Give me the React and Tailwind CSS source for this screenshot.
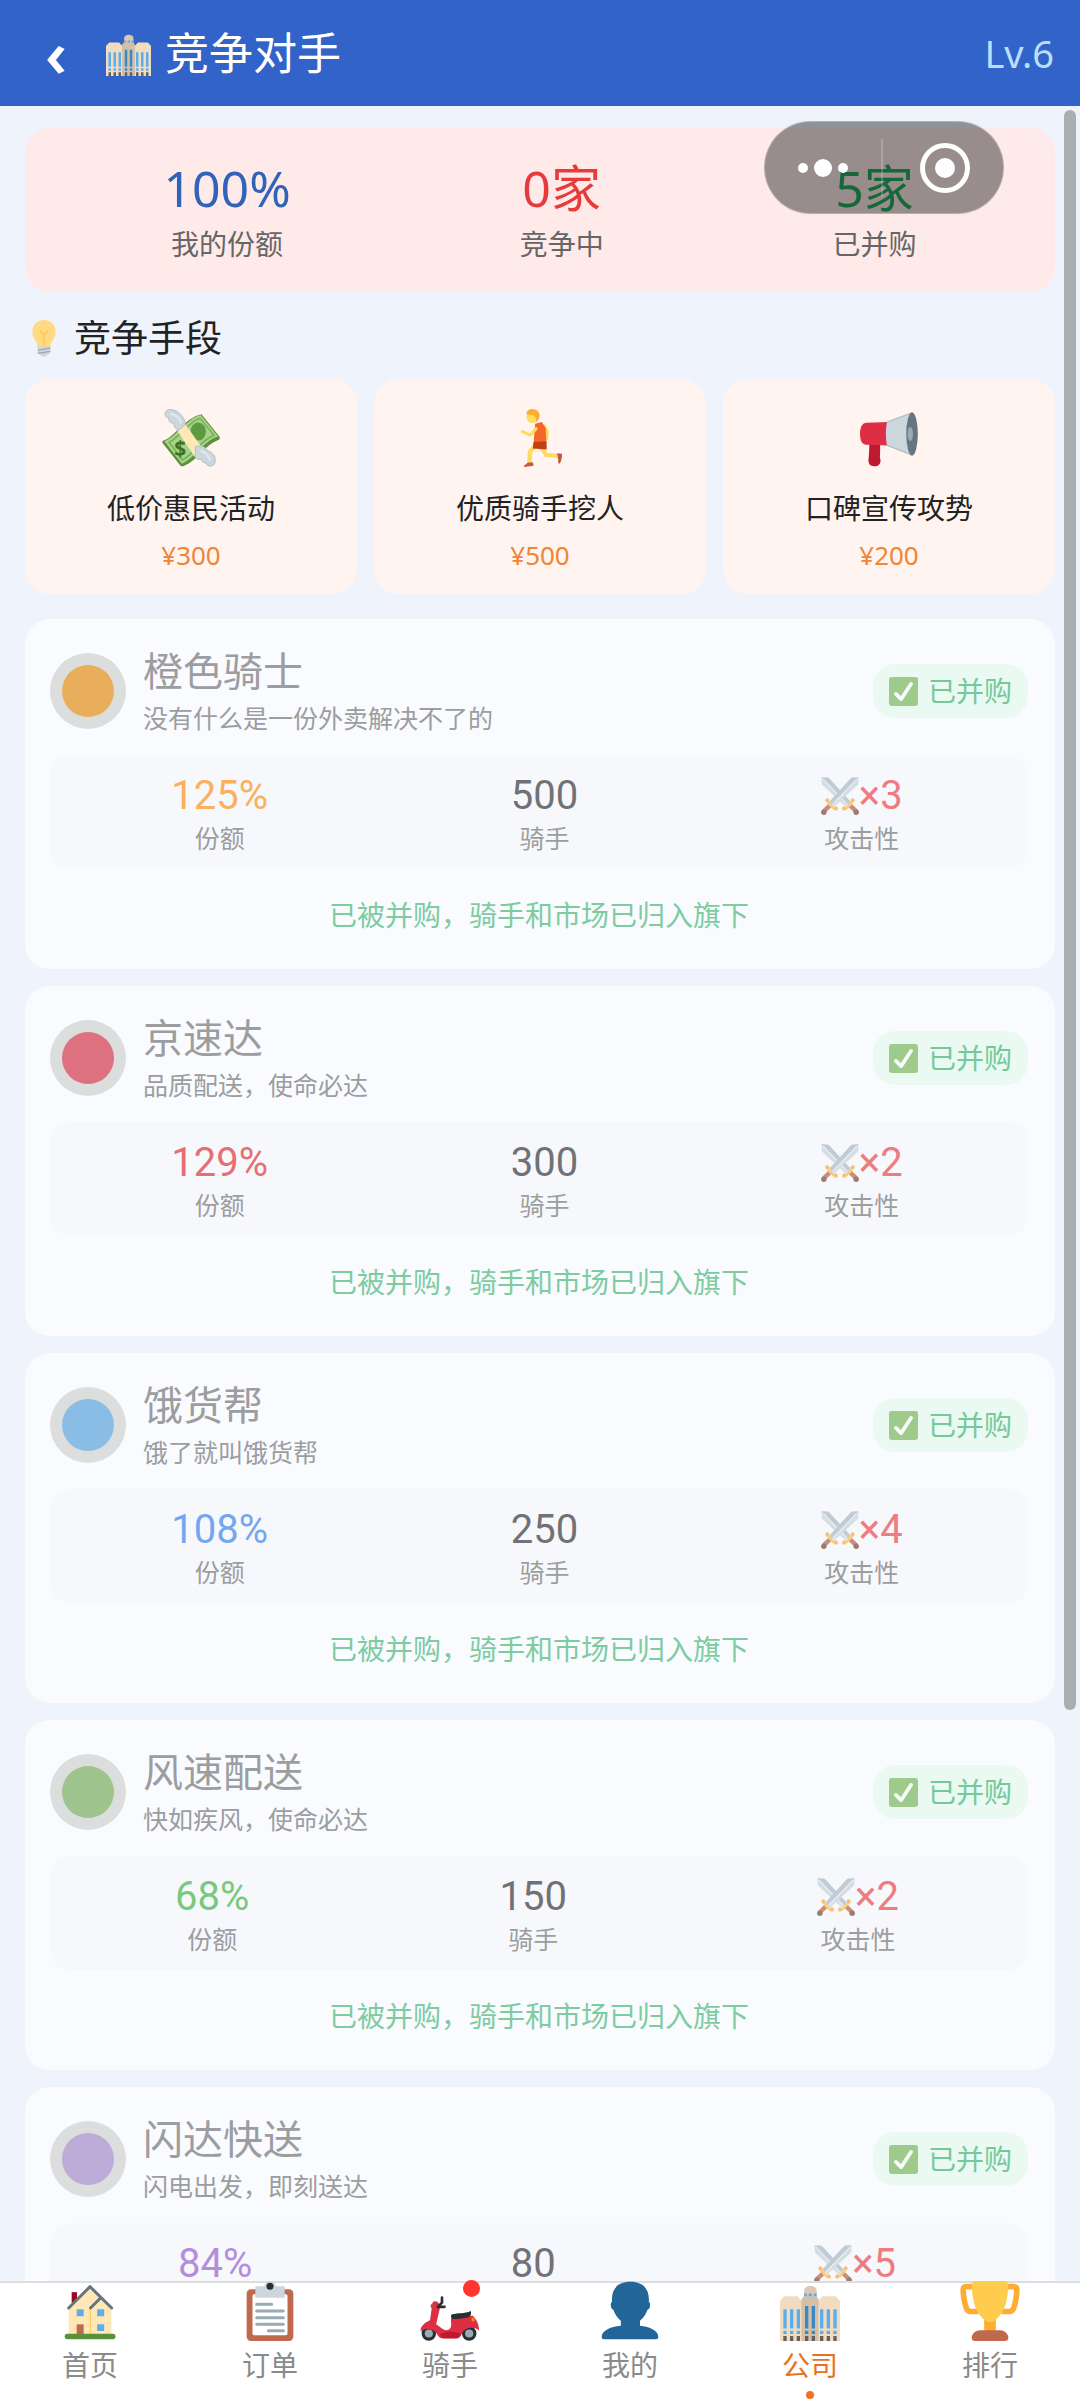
import React, { useState } from 'react'

const rivals = [
  { id: 1, name: '橙色骑士', slogan: '没有什么是一份外卖解决不了的', share: 125, riders: 500, attack: 3, dot: 'bg-[#e9ae5c]', text: 'text-[#fab05e]' },
  { id: 2, name: '京速达', slogan: '品质配送，使命必达', share: 129, riders: 300, attack: 2, dot: 'bg-[#dd7180]', text: 'text-[#e76e74]' },
  { id: 3, name: '饿货帮', slogan: '饿了就叫饿货帮', share: 108, riders: 250, attack: 4, dot: 'bg-[#8abde6]', text: 'text-[#73a7f0]' },
  { id: 4, name: '风速配送', slogan: '快如疾风，使命必达', share: 68, riders: 150, attack: 2, dot: 'bg-[#9fc38d]', text: 'text-[#78c97e]' },
  { id: 5, name: '闪达快送', slogan: '闪电出发，即刻送达', share: 84, riders: 80, attack: 5, dot: 'bg-[#bdabd8]', text: 'text-[#b58ddd]' }
]

const Building = ({ className }) => (
  <svg viewBox="0 0 36 36" className={className} aria-hidden="true">
    <path d="M14.5 10V6c0-2 1.500-3 3.700-3S22 4 22 6v4z" fill="#dac8b1" />
    <path d="M14.500 7.500h1.500v2h-1.500zM17.200 7.500h2v2h-2zM20.400 7.500H22v2h-1.600z" fill="#55acee" />
    <path d="M0 12l2.500-2.800h8L13 12v24H0zM23 12l2.500-2.800h8L36 12v24H23z" fill="#f1dcc1" />
    <path d="M12.800 11l1.500-1.800h7.400L23.200 11v25H12.800z" fill="#d4c0a9" />
    <path d="M2 17h2v11.500H2zM6 17h2v11.500H6zM10 17h2v11.500h-2zM24 17h2v11.500h-2zM28 17h2v11.500h-2zM32 17h2v11.500h-2zM2 29.800h2v2H2zM6 29.800h2v2H6zM10 29.800h2v2h-2zM24 29.800h2v2h-2zM28 29.800h2v2h-2zM32 29.800h2v2h-2z" fill="#5dadec" />
    <path d="M15 15h2v13.500h-2zM19 15h2v13.500h-2zM15 29.800h2v2h-2zM19 29.800h2v2h-2z" fill="#3b88c3" />
    <path d="M2 33h2v3H2zM6 33h2v3H6zM10 33h2v3h-2zM15 33h2v3h-2zM19 33h2v3h-2zM24 33h2v3h-2zM28 33h2v3h-2zM32 33h2v3h-2z" fill="#66605c" />
  </svg>
)

const Bulb = ({ className }) => (
  <svg viewBox="0 0 36 36" className={className} aria-hidden="true">
    <path d="M29 11.500c0 7.500-5 9.500-5 15.500H12c0-6-5-8-5-15.500C7 5.400 11.800 1 18 1s11 4.400 11 10.500z" fill="#ffd983" />
    <path d="M14 11l4 4 4-4M18 15v11" fill="none" stroke="#ffcc4d" strokeWidth="1.600" />
    <path d="M12 26h12v6l-3 2c-1 2-5 2-6 0l-3-2z" fill="#ccd6dd" />
    <path d="M12 29.500l12-1.800M12 32.500l12-1.800" stroke="#99aab5" strokeWidth="1.200" />
  </svg>
)

const MoneyWings = ({ className }) => (
  <svg viewBox="0 0 36 36" className={className} aria-hidden="true">
    <path d="M1 19.600C8 17 15 5 24.500 3.200l11 13.700c.8 1.100.4 2-.6 2.400C27 22 22 32 13.500 35.400c-1 .4-1.700.2-2.400-.7L.5 21.300c-.6-.8-.4-1.400.5-1.700z" fill="#5c913b" />
    <path d="M1.500 20C9 17.300 15.500 6 24 3.800L34.800 17C26 19.500 20.500 30.500 12.300 34z" fill="#a7d28b" />
    <path d="M4.500 20.600C11 17.500 16.500 8 23.600 5.800L32.300 16.300C24.500 19 19.500 28.500 12.600 31.600z" fill="none" stroke="#77b255" strokeWidth="1" />
    <ellipse cx="22.500" cy="14" rx="4.800" ry="5.600" fill="#5c9b3f" />
    <text x="7.600" y="29" fontSize="13" fontWeight="700" fill="#3e721d" className="font-['Noto_Sans']">$</text>
    <path d="M9.500 13.500L14.500 9.500 25.500 25 20.500 30z" fill="#ffe8b6" />
    <path d="M14.500 9.500C14 4 9 0 4.500.3 2 .5 1.200 3 2.300 4.500c.5.800 1.500 1 2 1-.6 1.800 1 3.600 3 3.200-.4 1.700 1 3.600 3 4.600z" fill="#ccd6dd" stroke="#aab8c2" strokeWidth=".5" />
    <path d="M20.500 30c.5-2 0-4.500 0-6.500 4-1.500 7 .5 8 2.500 3 .500 5 3.500 4.500 6.500 0 2-1.500 3-3 3-1.500 0-2.500-1-2.500-2-2 .3-3-1-3-2.200-1.700.3-3-.2-4-1.300z" fill="#ccd6dd" stroke="#aab8c2" strokeWidth=".5" />
    <path d="M5 3c3 .2 6 2.500 7 6M24 26c3 1 5 3 6 6" fill="none" stroke="#e1e8ed" strokeWidth="1.400" />
  </svg>
)

const Runner = ({ className }) => (
  <svg viewBox="0 0 36 36" className={className} aria-hidden="true">
    <g fill="none" strokeLinecap="round" strokeLinejoin="round">
      <path d="M20.500 10.500l2 3.500-.3 4.500" stroke="#f7dc5a" strokeWidth="1.900" />
      <path d="M19 24l2.800 4.500 7.200.6" stroke="#ffdc5d" strokeWidth="2.600" />
      <path d="M15.500 22.500l-3.800 4-.2 7" stroke="#ffdc5d" strokeWidth="2.800" />
    </g>
    <path d="M15 9.200l4.200-1.200 2.300 4L22 22l-8 .5.500-8z" fill="#f4662b" />
    <path d="M14 20.500l8-.5.200 5.200-8.700-.7z" fill="#c1400d" />
    <path d="M15.500 12.200l-3.500 4-5-2.200" fill="none" stroke="#ffdc5d" strokeWidth="1.900" strokeLinecap="round" strokeLinejoin="round" />
    <circle cx="13.400" cy="4.800" r="3.900" fill="#ffdc5d" />
    <path d="M9.500 3C9.800.8 12-.2 14 .1c2.500.3 4 2.200 3.700 4.500-.2 1.600-1 2.800-2 3.400 0-2-.6-3.800-2.200-4.500C12 3.900 10.400 3.700 9.500 3z" fill="#ffac33" />
    <path d="M10.500 33.200h3.200l.3 2-5.900.8c-.6-1 1.200-1.500 2.400-2.800zM28.600 27.500l3 .2c.3 2-.4 4.500-1.300 6.200-1 .2-1.200-.7-1-2.500z" fill="#c4593f" />
  </svg>
)

const Megaphone = ({ className }) => (
  <svg viewBox="0 0 36 36" className={className} aria-hidden="true">
    <path d="M5.800 21h6.700v5c0 2-.3 3 0 4.500.8 3-.5 5-3.500 5s-4-2-3.700-4.500c.3-3 .5-6 .5-10z" fill="#be1931" />
    <path d="M18 8v14.600l-14-.4c-2.500 0-4-2.500-4-6.700s1.500-7 4-7z" fill="#dd2e44" />
    <path d="M16.800 8L32.500 2.200v26.600L16.800 22.600c-1-4-1-10 0-14.600z" fill="#ccd6dd" />
    <path d="M16.800 8L32.500 2.200M16.800 22.600l15.700 6.200" fill="none" stroke="#8899a6" strokeWidth=".4" />
    <ellipse cx="32.300" cy="15.500" rx="3.600" ry="13.400" fill="#66757f" />
    <ellipse cx="31.200" cy="15.500" rx="1.700" ry="4.400" fill="#99aab5" />
  </svg>
)

const Sword = ({ flip }) => (
  <g transform={flip ? 'translate(36 0) scale(-1 1)' : undefined}>
    <path d="M.5.300L7.200.6l20.800 22.600-4.500 4.800L.8 7.200z" fill="#c3cfd8" />
    <path d="M.5.300L7.200.6l20.800 22.600-2 2.300z" fill="#a3b4c0" />
    <path d="M2 2l22 23.500" stroke="#e1e8ed" strokeWidth="1.200" />
    <path d="M27 26.500l6.500 6" stroke="#b5573c" strokeWidth="4.200" />
    <path d="M22 29c2 1.500 3.500-.5 4.500-2s3-2.500 3.500-4.500" fill="none" stroke="#fdb93c" strokeWidth="2.800" strokeLinecap="round" />
    <circle cx="21.800" cy="30" r="1.900" fill="#f5a52e" />
    <circle cx="30" cy="22" r="1.900" fill="#f5a52e" />
    <circle cx="33.300" cy="33.300" r="2.600" fill="#6d3b2e" />
  </g>
)

const Swords = ({ className }) => (
  <svg viewBox="0 0 36 36" className={className} aria-hidden="true">
    <Sword />
    <Sword flip />
  </svg>
)

const CheckMark = ({ className }) => (
  <svg viewBox="0 0 36 36" className={className} aria-hidden="true">
    <rect width="36" height="36" rx="3" fill="#77b255" />
    <path d="M8.500 21l6.500 6.500L27.500 8.500" fill="none" stroke="#fff" strokeWidth="4.600" strokeLinecap="round" strokeLinejoin="round" />
  </svg>
)

const House = ({ className }) => (
  <svg viewBox="0 0 36 36" className={className} aria-hidden="true">
    <path d="M7 6.700h3.200V13H7z" fill="#a0041e" />
    <path d="M5.200 15.500L18 3.500l12.800 12V33H5.200z" fill="#ffe8b6" />
    <path d="M18.200 16v17" stroke="#ffcc4d" strokeWidth=".6" />
    <path d="M5.200 16.200L18 3.400l13 12.800M24.300 10.200l-6 6" fill="none" stroke="#66757f" strokeWidth="1.800" strokeLinecap="round" strokeLinejoin="round" />
    <path d="M10 17h4.200v4.200H10zM22.300 17h4.200v4.200h-4.200zM22.300 26h4.200v4h-4.200z" fill="#5dadec" />
    <path d="M10 26h4.200v6H10z" fill="#c1694f" />
    <rect x="2.800" y="31.700" width="30.500" height="3.200" rx="1.600" fill="#5c913b" />
  </svg>
)

const Clipboard = ({ className }) => (
  <svg viewBox="0 0 36 36" className={className} aria-hidden="true">
    <rect x="4" y="5" width="28" height="31" rx="2.500" fill="#c1694f" />
    <rect x="7.500" y="8" width="21" height="24.500" rx="1" fill="#fff" />
    <path d="M10 3.200h4.700a3.300 3.300 0 0 1 6.600 0H26c.5 0 .8.300.8.800v6H9.200V4c0-.5.3-.8.800-.8z" fill="#ccd6dd" />
    <circle cx="18" cy="3.200" r="2.100" fill="#292f33" />
    <path d="M10 14h9M10 18h16M10 22h16M10 26h16M17 29.800h9" stroke="#99aab5" strokeWidth="1.800" strokeLinecap="round" />
  </svg>
)

const Scooter = ({ className }) => (
  <svg viewBox="0 0 36 36" className={className} aria-hidden="true">
    <circle cx="5.300" cy="31.500" r="3.400" fill="#99aab5" stroke="#292f33" strokeWidth="1.900" />
    <circle cx="29.500" cy="31.500" r="3.400" fill="#99aab5" stroke="#292f33" strokeWidth="1.900" />
    <path d="M7.500 13c1-1.300 3-1 3.800.5l.6 3L9.700 26c2.500 1.500 4 3.500 6 3.500s3.300-1.500 3-4c-.3-2-.3-3.500 1-4.200l12-.5c2 2 3.800 5 3.800 9-2.500-2.500-8.500-2.500-10.500 2-.8 1.700-1.500 2.700-3 2.700h-8c-2 0-3-1-4-3-1.500-3-7-3.300-9.700-1.500C0 27 3.500 24.500 6 23.500z" fill="#dd2e44" />
    <path d="M12 32c3-2 8-2 12.500-.5-.7 2-1.500 2.800-3 2.800h-7c-1.200 0-2-1-2.500-2.300z" fill="#be1931" />
    <path d="M18.700 20.200c3.500-1.200 8-.5 11.800-2.200.6 2.500-.5 3.600-2.500 4-3 .500-6 .8-8.300.8-1-.5-1.300-1.600-1-2.600z" fill="#292f33" />
    <path d="M31 22h1.700v2.200H31z" fill="#f4900c" />
    <path d="M13.200 10v3l-2.500 2.500h4" fill="none" stroke="#292f33" strokeWidth="1.600" strokeLinecap="round" strokeLinejoin="round" />
    <circle cx="7.900" cy="15" r="1.500" fill="#c1463f" />
  </svg>
)

const Person = ({ className }) => (
  <svg viewBox="0 0 36 36" className={className} aria-hidden="true">
    <path d="M24 26.800v-3c2.300-2 3.800-4.300 4.500-6.600 1.500-.2 2.200-3.700.8-4.800C29.800 5.500 26.500.500 18.200.500S6.700 5.500 7.200 12.400c-1.400 1.100-.7 4.600.8 4.800.7 2.300 2.200 4.600 4.500 6.600v3C6 27.200 1 30 1 33.500c0 1 .6 1.500 1.500 1.500h31c.9 0 1.500-.5 1.500-1.500 0-3.500-5-6.300-11-6.700z" fill="#269" />
  </svg>
)

const Trophy = ({ className }) => (
  <svg viewBox="0 0 36 36" className={className} aria-hidden="true">
    <path d="M9 3.400H3.800c-1.400 0-2 .8-1.900 2.200.2 4 .8 7.500 1.800 10.400.5 1.600 1.300 2.300 2.800 2.300H11M27 3.400h5.200c1.400 0 2 .8 1.900 2.200-.2 4-.8 7.500-1.800 10.400-.5 1.600-1.300 2.300-2.800 2.300H25" fill="none" stroke="#ffac33" strokeWidth="3.400" />
    <path d="M14.500 20h7v10h-7z" fill="#ffac33" />
    <path d="M9.500 0h17c1.500 0 2.400.8 2.400 2.300C28.900 13 26 20 20.500 24c-1 .8-4 .8-5 0C10 20 7.100 13 7.100 2.300 7.100.8 8 0 9.500 0z" fill="#ffcc4d" />
    <path d="M12 29.600h12c3 0 5 2.500 5 4.600 0 1.200-.8 1.800-2 1.800H9c-1.200 0-2-.6-2-1.800 0-2.100 2-4.600 5-4.600z" fill="#c1694f" />
  </svg>
)

const tactics = [
  { name: '低价惠民活动', price: 300, Icon: MoneyWings },
  { name: '优质骑手挖人', price: 500, Icon: Runner },
  { name: '口碑宣传攻势', price: 200, Icon: Megaphone }
]

const tabs = [
  { key: 'home', label: '首页', Icon: House },
  { key: 'orders', label: '订单', Icon: Clipboard },
  { key: 'riders', label: '骑手', Icon: Scooter, badge: true },
  { key: 'mine', label: '我的', Icon: Person },
  { key: 'company', label: '公司', Icon: Building },
  { key: 'rank', label: '排行', Icon: Trophy }
]

const SummaryItem = ({ value, label, color }) => (
  <div className="text-center">
    <div className={`text-[50px] leading-[64px] ${color}`}>{value}</div>
    <div className="mt-1 text-[28px] leading-10 text-[#666]">{label}</div>
  </div>
)

const RivalCard = ({ rival }) => (
  <article className="rounded-[25px] bg-[#f9fbff] py-[25px] pr-[27px] pl-[25px]">
    <div className="flex items-center">
      <div className="flex size-[76px] shrink-0 items-center justify-center rounded-full bg-[#dcdddd]">
        <div className={`size-[52px] rounded-full ${rival.dot}`} />
      </div>
      <div className="ml-[17px] flex-1">
        <h3 className="text-[40px] leading-[54px] text-[#9c9d9f]">{rival.name}</h3>
        <p className="text-[25px] leading-10 text-[#9c9d9f]">{rival.slogan}</p>
      </div>
      <div className="flex h-[54px] items-center gap-2.5 rounded-[22px] bg-[#eafaf2] px-4 text-[28px] text-[#74c99c]">
        <CheckMark className="size-[29px] opacity-65" />
        已并购
      </div>
    </div>
    <div className="mt-[17px] flex justify-around rounded-[20px] bg-[#f7f8fc] pt-4 pr-1 pb-3.5 text-center">
      <div>
        <div className={`font-['Roboto'] text-[40px] leading-[50px] ${rival.text}`}>{rival.share}%</div>
        <div className="text-[25px] leading-[34px] text-[#9c9d9f]">份额</div>
      </div>
      <div>
        <div className="font-['Roboto'] text-[40px] leading-[50px] text-[#717275]">{rival.riders}</div>
        <div className="text-[25px] leading-[34px] text-[#9c9d9f]">骑手</div>
      </div>
      <div>
        <div className="flex items-center font-['Roboto'] text-[40px] leading-[50px] text-[#ee7c80]">
          <Swords className="size-[38px] opacity-65" />
          <span>×{rival.attack}</span>
        </div>
        <div className="text-[25px] leading-[34px] text-[#9c9d9f]">攻击性</div>
      </div>
    </div>
    <p className="pt-[26px] pb-[9px] text-center text-[28px] leading-10 text-[#7dcc9f]">已被并购，骑手和市场已归入旗下</p>
  </article>
)

const App = () => {
  const [activeTab, setActiveTab] = useState('company')

  return (
    <div className="relative flex h-screen flex-col overflow-hidden bg-[#eff3fb] font-['Noto_Sans','Noto_Sans_CJK_SC',sans-serif]">
      <header className="flex h-[106px] shrink-0 items-center bg-[#3163c8] px-[26px] text-white">
        <button aria-label="返回" className="flex h-20 w-[60px] items-center justify-center text-[64px] leading-none font-semibold">
          ‹
        </button>
        <h1 className="ml-5 flex flex-1 items-center gap-[14px] text-[44px] leading-[60px]">
          <Building className="size-[45px]" />
          竞争对手
        </h1>
        <span className="text-[38px] text-[#bbdefb]">Lv.6</span>
      </header>

      <main className="min-h-0 flex-1 overflow-y-auto px-[25px] pt-[22px] [scrollbar-width:none]">
        <section className="flex justify-around rounded-[25px] bg-[#ffeaea] px-6 py-7">
          <SummaryItem value="100%" label="我的份额" color="text-[#3163b8]" />
          <SummaryItem value="0家" label="竞争中" color="text-[#e53b3b]" />
          <SummaryItem value="5家" label="已并购" color="text-[#27ae60]" />
        </section>

        <h2 className="mt-6 mb-[19px] flex items-center gap-[11px] text-[37px] leading-[44px] text-[#222]">
          <Bulb className="size-[38px]" />
          竞争手段
        </h2>
        <div className="grid grid-cols-3 gap-[17px]">
          {tactics.map(({ name, price, Icon }) => (
            <button key={name} className="flex flex-col items-center rounded-[25px] bg-[#fff4f0] pt-[30px] pb-[21px]">
              <Icon className="size-[58px]" />
              <span className="mt-5 text-[28px] leading-[42px] text-[#222]">{name}</span>
              <span className="mt-2 text-[26px] leading-9 text-[#f08536]">¥{price}</span>
            </button>
          ))}
        </div>

        <div className="mt-[25px] flex flex-col gap-[17px] pb-6">
          {rivals.map(rival => (
            <RivalCard key={rival.id} rival={rival} />
          ))}
        </div>
      </main>

      {/* scroll thumb */}
      <div className="absolute top-[110px] right-1 h-2/3 w-3 rounded-full bg-[#a9aeb0]" />

      {/* mini program capsule */}
      <div className="absolute top-[121px] right-[76px] flex h-[93px] w-[240px] items-center rounded-full border border-white/30 bg-black/40">
        <button aria-label="更多" className="flex h-full flex-1 items-center justify-center gap-1.5">
          <span className="size-2.5 rounded-full bg-white" />
          <span className="size-[18px] rounded-full bg-white" />
          <span className="size-2.5 rounded-full bg-white" />
        </button>
        <div className="h-[58px] w-0.5 bg-white/20" />
        <button aria-label="关闭" className="flex h-full flex-1 items-center justify-center pl-1">
          <span className="flex size-[50px] items-center justify-center rounded-full border-5 border-white">
            <span className="size-5 rounded-full bg-white" />
          </span>
        </button>
      </div>

      <nav className="grid h-[119px] shrink-0 grid-cols-6 bg-white shadow-[inset_0_2px_0_#dddddd]">
        {tabs.map(({ key, label, Icon, badge }) => (
          <button key={key} onClick={() => setActiveTab(key)} className="flex flex-col items-center">
            <span className="relative">
              <Icon className="size-[60px]" />
              {badge && <span className="absolute -top-px right-0 size-[17px] rounded-full bg-[#ff3530]" />}
            </span>
            <span className={`mt-1 text-[28px] leading-10 ${activeTab === key ? 'text-[#e8701f]' : 'text-[#8a8a8a]'}`}>
              {label}
            </span>
            {activeTab === key && <span className="mt-1.5 size-2 rounded-full bg-[#f0731f]" />}
          </button>
        ))}
      </nav>
    </div>
  )
}

export default App
